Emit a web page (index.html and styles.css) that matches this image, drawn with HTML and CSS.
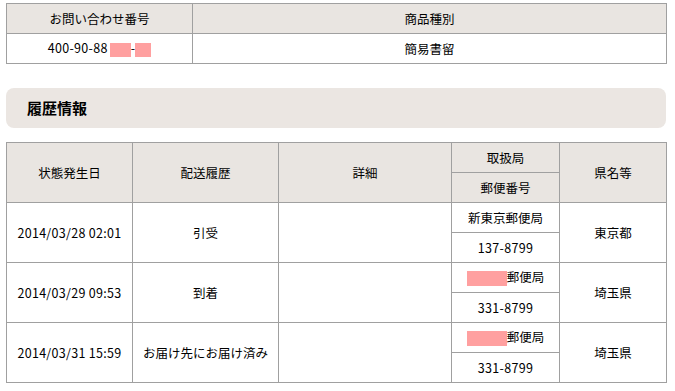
FILE: index.html
```html
<!DOCTYPE html>
<html lang="ja">
<head>
<meta charset="utf-8">
<title>追跡結果</title>
<link rel="stylesheet" href="styles.css">
</head>
<body>
<div class="page">
  <table class="grid summary">
    <colgroup><col class="c-num"><col class="c-kind"></colgroup>
    <tr class="row"><th>お問い合わせ番号</th><th>商品種別</th></tr>
    <tr class="row"><td class="num">400-90-88<span class="redact r1"></span>-<span class="redact r2"></span></td><td>簡易書留</td></tr>
  </table>

  <div class="section-head">履歴情報</div>

  <table class="grid history">
    <colgroup><col class="h1"><col class="h2"><col class="h3"><col class="h4"><col class="h5"></colgroup>
    <tr class="row"><th rowspan="2">状態発生日</th><th rowspan="2">配送履歴</th><th rowspan="2">詳細</th><th>取扱局</th><th rowspan="2">県名等</th></tr>
    <tr class="row"><th>郵便番号</th></tr>

    <tr class="row"><td rowspan="2" class="num">2014/03/28 02:01</td><td rowspan="2">引受</td><td rowspan="2"></td><td>新東京郵便局</td><td rowspan="2">東京都</td></tr>
    <tr class="row"><td class="num">137-8799</td></tr>

    <tr class="row"><td rowspan="2" class="num">2014/03/29 09:53</td><td rowspan="2">到着</td><td rowspan="2"></td><td><span class="redact r3"></span>郵便局</td><td rowspan="2">埼玉県</td></tr>
    <tr class="row"><td class="num">331-8799</td></tr>

    <tr class="row"><td rowspan="2" class="num">2014/03/31 15:59</td><td rowspan="2">お届け先にお届け済み</td><td rowspan="2"></td><td><span class="redact r3"></span>郵便局</td><td rowspan="2">埼玉県</td></tr>
    <tr class="row"><td class="num">331-8799</td></tr>
  </table>
</div>
</body>
</html>
```

FILE: styles.css
```css
html, body {
  margin: 0;
  padding: 0;
  background: #ffffff;
}
body {
  font-family: "Noto Sans CJK JP", "Noto Sans", sans-serif;
  font-size: 12.5px;
  color: #000000;
}
.page {
  padding: 3px 0 0 6px;
  width: 660px;
}
.grid {
  border-collapse: collapse;
  width: 660px;
  table-layout: fixed;
}
.grid th, .grid td {
  border: 1px solid #a0a0a0;
  padding: 0;
  height: 29px;
  text-align: center;
  vertical-align: middle;
  font-weight: normal;
  line-height: 16px;
  white-space: nowrap;
}
.grid th {
  background: #e9e5e1;
}
.grid .num {
  letter-spacing: 0.3px;
}
.c-num { width: 186px; }
.c-kind { width: 474px; }

.section-head {
  margin-top: 24px;
  height: 40px;
  background: #ebe6e2;
  border-radius: 8px;
  font-size: 15px;
  font-weight: bold;
  line-height: 40px;
  padding-left: 21px;
}
.history { margin-top: 14px; }
.h1 { width: 126px; }
.h2 { width: 146px; }
.h3 { width: 173px; }
.h4 { width: 108px; }
.h5 { width: 107px; }

.redact {
  display: inline-block;
  background: #ffa0a0;
  vertical-align: middle;
  height: 14px;
}
.r1 { width: 21px; margin-left: 2px; }
.r2 { width: 16px; }
.r3 { width: 40px; height: 15px; }
```
